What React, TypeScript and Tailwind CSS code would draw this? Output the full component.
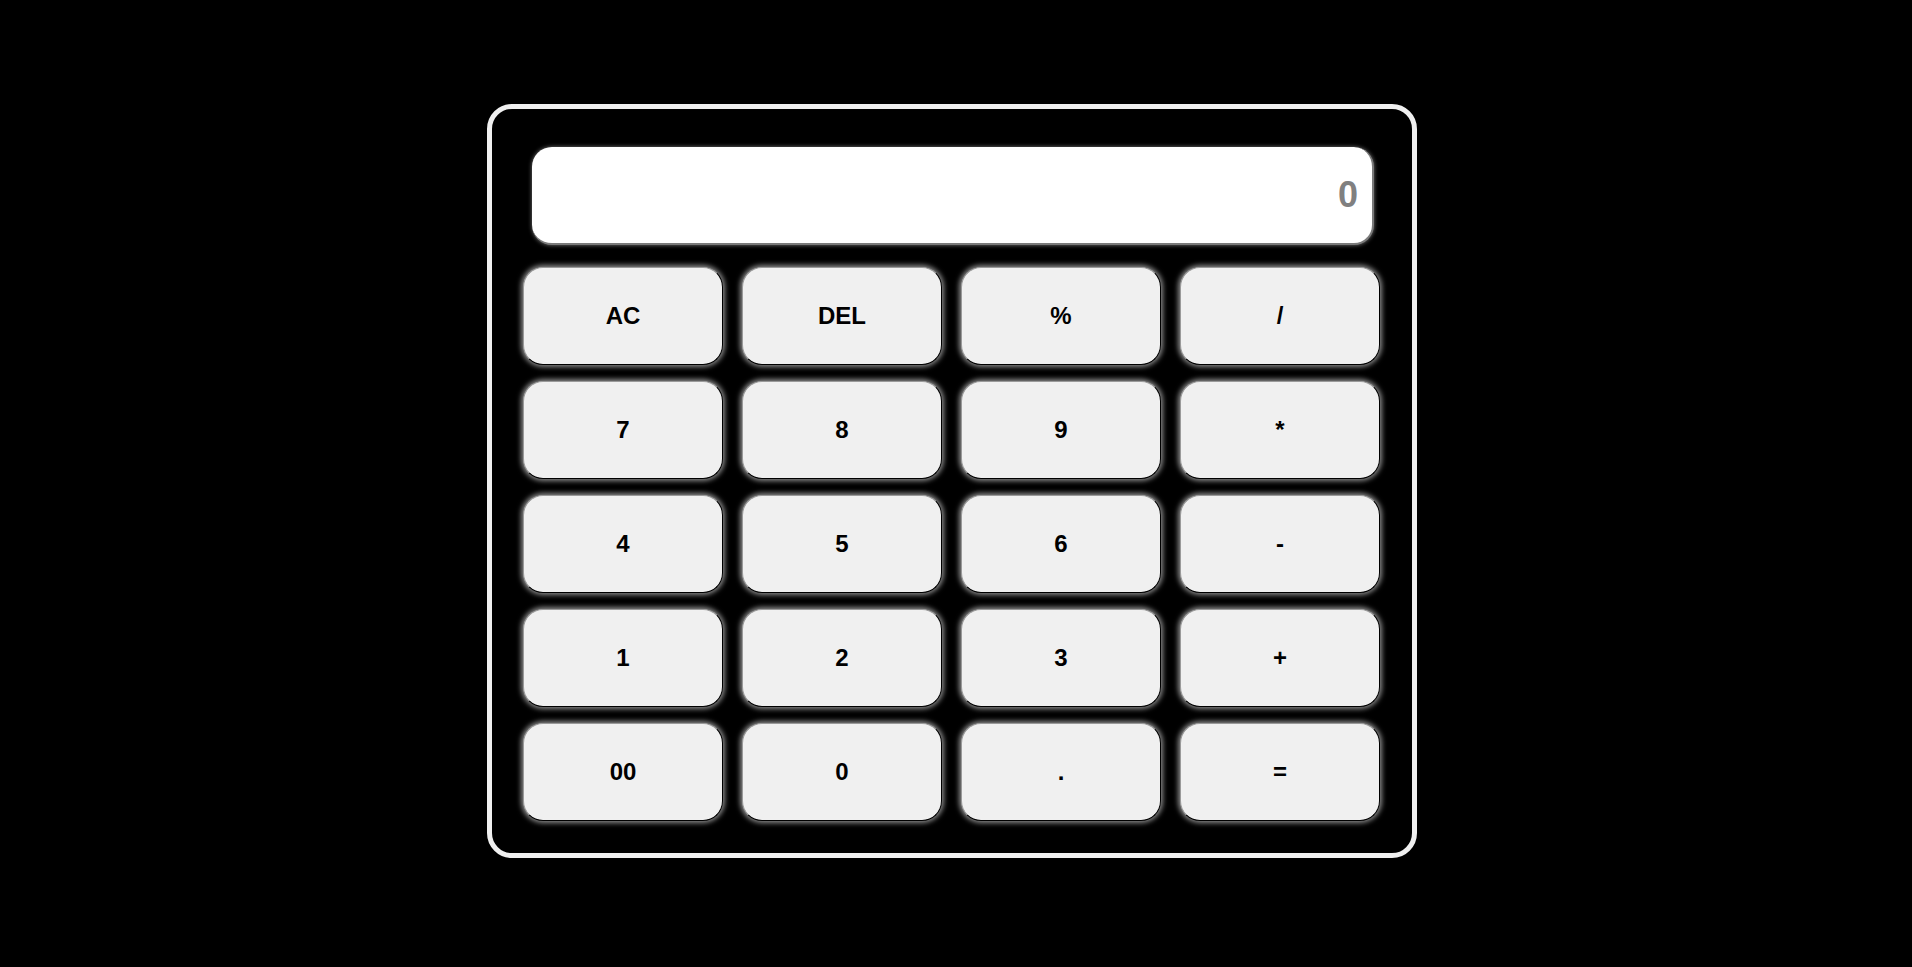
const keys = [
  'AC', 'DEL', '%', '/',
  '7', '8', '9', '*',
  '4', '5', '6', '-',
  '1', '2', '3', '+',
  '00', '0', '.', '=',
];

function Key({ label }: { label: string }) {
  return (
    <button
      type="button"
      className="flex h-[98px] w-[200px] items-center justify-center rounded-[20px] border border-t-[#9a9a9a] border-l-[#9a9a9a] border-b-black border-r-black bg-[#f0f0f0] text-[24px] font-bold text-black shadow-[0_0_5px_2px_#8a8a8a]"
    >
      {label}
    </button>
  );
}

export default function App() {
  return (
    <div className="flex min-h-screen justify-center bg-black pr-[8px] pt-[104px] font-['Liberation_Sans',Arial,sans-serif]">
      <div className="h-[754px] w-[930px] rounded-[25px] border-[5px] border-[#f0f0f0] bg-black pl-[31px] pt-[38px]">
        <div className="ml-[9px] flex h-[98px] w-[842px] items-center justify-end rounded-[20px] border-r-2 border-b-2 border-[#7a7a7a] bg-white pr-[14px] shadow-[0_0_4px_#777]">
          <span className="text-[36px] font-bold text-[#808080]">0</span>
        </div>
        <div className="mt-[22px] grid w-[857px] grid-cols-[repeat(4,200px)] gap-x-[19px] gap-y-[16px]">
          {keys.map((k) => (
            <Key key={k} label={k} />
          ))}
        </div>
      </div>
    </div>
  );
}
